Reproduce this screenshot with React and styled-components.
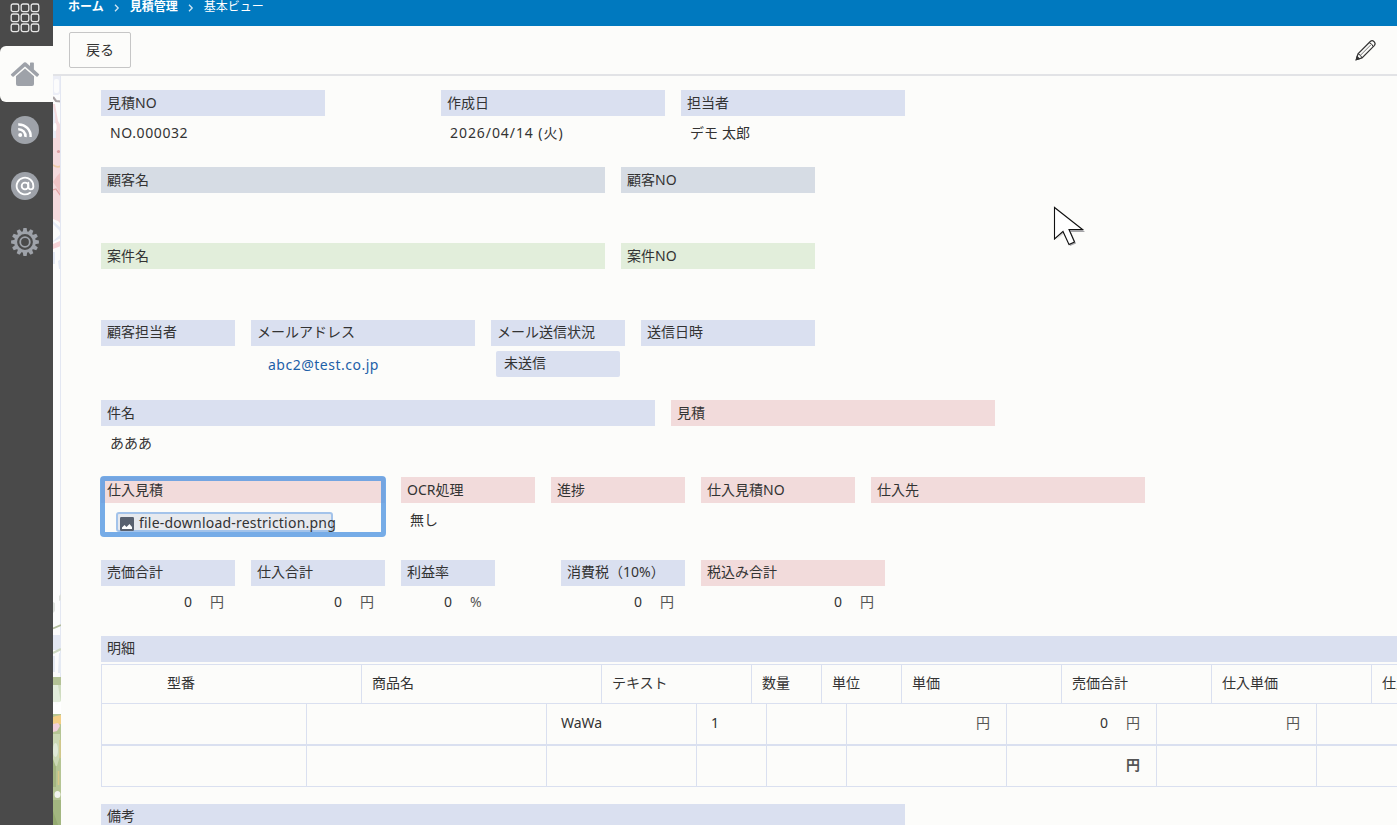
import React from 'react';
import styled, { createGlobalStyle } from 'styled-components';
import { AtSign } from 'lucide-react';

const GlobalStyle = createGlobalStyle`
  * {
    box-sizing: border-box;
  }

  body {
    margin: 0;
    overflow: hidden;
    color: #333;
    background: #fcfcfa;
    font-family: 'Noto Sans', 'Noto Sans CJK JP', sans-serif;
    font-size: 14px;
  }
`;

const COLORS = {
  blue: '#dae0f0',
  slate: '#d6dce4',
  green: '#e2eedb',
  pink: '#f2dbdb',
};

const Layout = styled.div`
  position: relative;
  display: flex;
  height: 825px;
  overflow: hidden;
`;

const Sidebar = styled.nav`
  flex: none;
  width: 53px;
  background: #4a4a4a;
`;

const AppsButton = styled.div`
  display: flex;
  justify-content: center;
  height: 46px;
  padding: 3px 3px 0 0;
`;

const NavItem = styled.div`
  display: flex;
  align-items: center;
  justify-content: center;
  height: 56px;
  padding-right: 3px;
  border-radius: 6px 0 0 6px;
  background: ${({ $active }) => ($active ? '#fcfcfa' : 'transparent')};
`;

const RoundIcon = styled.span`
  display: flex;
  align-items: center;
  justify-content: center;
  width: 28px;
  height: 28px;
  border-radius: 50%;
  color: #fff;
  background: #9ea2a9;
`;

const Main = styled.div`
  flex: 1;
  min-width: 0;
  display: flex;
  flex-direction: column;
`;

const Breadcrumb = styled.div`
  flex: none;
  display: flex;
  height: 26px;
  padding-left: 15px;
  color: #fff;
  background: #0079bf;
  font-size: 12px;
  line-height: 14px;

  svg {
    margin: 4px 10px 0 10px;
  }
`;

const Toolbar = styled.div`
  flex: none;
  display: flex;
  align-items: flex-start;
  justify-content: space-between;
  height: 50px;
  padding: 6px 20px 0 16px;
  border-bottom: 2px solid #e2e3e6;

  > svg {
    margin-top: 7px;
  }
`;

const BackButton = styled.button`
  width: 62px;
  height: 36px;
  padding: 0 0 3px;
  border: 1px solid #c6c6c6;
  border-radius: 2px;
  color: #333;
  background: #fcfcfa;
  font: inherit;
`;

const Body = styled.div`
  flex: 1;
  min-height: 0;
  display: flex;
`;

const Wallpaper = styled.div`
  flex: none;
  width: 8px;
  overflow: hidden;
`;

const Sheet = styled.div`
  flex: 1;
  min-width: 0;
  padding: 14px 0 0 40px;
  overflow: hidden;
`;

const Row = styled.div`
  display: flex;
  gap: 16px;
  height: ${({ $h }) => $h}px;
`;

const NotesRow = styled(Row)`
  padding-top: 17px;
`;

const FieldBox = styled.div`
  position: relative;
  flex: none;
  width: ${({ $w }) => $w}px;
  margin-left: ${({ $gap }) => $gap || 0}px;
`;

const Label = styled.div`
  height: 26px;
  padding-left: 6px;
  line-height: ${({ $raised }) => ($raised ? 23 : 25)}px;
  white-space: nowrap;
  background: ${({ $tone }) => COLORS[$tone]};
`;

const Value = styled.div`
  padding: 4px 0 0 9px;
  line-height: 26px;
  letter-spacing: ${({ $spacing }) => $spacing || 0}px;
  white-space: nowrap;
`;

const MailLink = styled.a`
  display: block;
  padding: 6px 0 0 17px;
  line-height: 26px;
  letter-spacing: 0.5px;
  color: #1d60a8;
`;

const StatusBadge = styled.div`
  width: 124px;
  height: 26px;
  margin: 5px 0 0 5px;
  padding-left: 8px;
  border-radius: 2px;
  line-height: 24px;
  background: ${COLORS.blue};
`;

const Amount = styled.div`
  display: flex;
  justify-content: flex-end;
  gap: 18px;
  padding: ${({ $inTable }) => ($inTable ? '0 16px 0 0' : '3px 11px 0 0')};
  line-height: 26px;
  font-weight: ${({ $bold }) => ($bold ? 700 : 400)};

  span:last-child {
    min-width: 14px;
    color: #555;
  }
`;

const FocusFrame = styled.div`
  position: absolute;
  top: -1px;
  left: -1px;
  width: 286px;
  height: 61px;
  border: 5px solid rgba(84, 151, 226, 0.8);
  border-radius: 4px;
`;

const FileRow = styled.div`
  display: flex;
  align-items: center;
  width: 217px;
  height: 20px;
  margin: 9px 0 0 15px;
  padding-left: 2px;
  border: 2px solid #a3c3ea;
  border-radius: 3px;
  background: #e6e9ee;
  white-space: nowrap;

  svg {
    flex: none;
    margin: 3px 5px 0 0;
  }
`;

const FileName = styled.span`
  letter-spacing: 0.22px;
`;

const TableRow = styled.div`
  display: flex;
  width: max-content;
  height: ${({ $h }) => $h}px;
  border-top: ${({ $top }) => $top || 0}px solid ${COLORS.blue};
  border-bottom: ${({ $bottom }) => $bottom || 0}px solid ${COLORS.blue};
`;

const Cell = styled.div`
  flex: none;
  width: ${({ $w }) => $w}px;
  padding: ${({ $pad }) => $pad};
  border-left: 1px solid ${COLORS.blue};
  line-height: 26px;
  white-space: nowrap;
`;

const Pointer = styled.svg`
  position: absolute;
  left: 1052px;
  top: 205px;
`;

/* sliver of the flower wallpaper left of the sheet */
const Flowers = () => (
  <svg width="8" height="749" viewBox="0 0 8 749">
    <rect width="8" height="749" fill="#fcfcfc" />
    <path d="M0 0h8v17l-3 2H0z" fill="#eceef6" />
    <rect x="1" y="3" width="5" height="14" rx="2" fill="#fcfcfc" />
    <path d="M0 21 3 25 8 25.500" fill="none" stroke="#aaa4a6" strokeWidth="2.200" />
    <path d="M0 28h2l3 17 3 5v98l-3-3-5-2z" fill="#f5dadd" />
    <path d="M0 30 2 38 3 62H0z" fill="#e9edf7" />
    <ellipse cx="2" cy="51" rx="1.600" ry="4" fill="#fff" />
    <circle cx="5.500" cy="75.500" r="1.600" fill="#dd9da0" />
    <path d="M0 89q4 3 8 1" fill="none" stroke="#efcaa6" strokeWidth="1.800" />
    <path d="M0 106 4 112 8 119V96l-4 4z" fill="#f0c3c5" />
    <path d="M0 114l3-1 5 7" fill="none" stroke="#e3a3a5" strokeWidth="1.300" />
    <path d="M0 148 6 154 8 159V152L0 145zM0 165l8-7v4l-8 4z" fill="#e6ebf7" />
    <path d="M0 168 8 164.500V170L0 173z" fill="#f6d3d7" />
    <path d="M0 176h2v12H0zM5 185l3-2v10H6z" fill="#e4e9f5" />
    <path d="M7.500 0V749" stroke="#e3e7f2" />
    <path d="M0 526l2 1v8l-2 2zM6 520l2-2v6l-2 1z" fill="#dfe2df" />
    <path d="M0 552.500 8 549" stroke="#b3bd9c" strokeWidth="1.800" />
    <rect y="559" width="8" height="15" fill="#e3e7f2" />
    <path d="M0 577 8 573" stroke="#cdd8c2" strokeWidth="2.400" />
    <path d="M0 580h2v16H0zM6 577h2v20H5z" fill="#e5eaf3" />
    <rect y="601" width="8" height="8" fill="#b3c295" />
    <rect y="609" width="8" height="17" fill="#e2ecdb" />
    <path d="M5 609h3v18z" fill="#cfdcc0" />
    <path d="M0 626 4 629 8 625V638H0z" fill="#fff" />
    <rect y="638" width="8" height="111" fill="#b5c594" />
    <path d="M0 641l3-1 5-1v9L2 650H0z" fill="#f3ce85" />
    <path d="M0 648l5-1 2 3-3 5-4 1z" fill="#f0d0dc" />
    <path d="M0 658h7v22L4 690H0z" fill="#cbd8b4" />
    <ellipse cx="2.500" cy="674" rx="2.500" ry="7" fill="#e0e9d8" />
    <path d="M7 664v18M5.500 695v14" stroke="#d9c886" strokeWidth="1.500" />
    <path d="M0 683l3 8v20H0z" fill="#a3b580" />
    <ellipse cx="4.500" cy="718.500" rx="3" ry="3.500" fill="#f2f4ef" />
    <rect y="724" width="8" height="25" fill="#a2b680" />
    <path d="M0 735 5 749H0z" fill="#94aa70" />
  </svg>
);

const AppsIcon = () => (
  <svg width="30" height="30" fill="none" stroke="#e6e6e6" strokeWidth="1.3">
    {[0, 1, 2].map((r) =>
      [0, 1, 2].map((c) => (
        <rect key={`${r}${c}`} x={1.2 + c * 10} y={1 + r * 10} width="7.6" height="7.6" rx="1.8" />
      ))
    )}
  </svg>
);

const HomeIcon = () => (
  <svg width="30" height="28" viewBox="0 0 30 28" fill="#9ea2a9">
    <path d="M1 14.200 14 2.600q1-.8 2 0l4 3.400V3.200q0-.7.7-.7h2.500q.7 0 .7.7V9.500l5 4.500q.5.600 0 1.100l-1.300 1.300q-.6.500-1.200 0L15 6.500 3.700 16.400q-.6.500-1.200 0L1.100 15.200q-.5-.5-.1-1z" />
    <path d="M15 8.500 6 16.300V24q0 2 2 2h14q2 0 2-2v-7.700z" />
  </svg>
);

const FeedIcon = () => (
  <svg width="16" height="16" viewBox="0 0 16 16" fill="none" stroke="#fff" strokeWidth="2.500">
    <circle cx="3.200" cy="13" r="2" fill="#fff" stroke="none" />
    <path d="M1.200 7.300A7 7 0 0 1 8.500 15M1.200 2.500A11.700 11.700 0 0 1 13.600 15" />
  </svg>
);

const GearIcon = () => (
  <svg width="28" height="28" viewBox="-14 -14 28 28" fill="none" stroke="#9ea2a9">
    <circle r="9.300" strokeWidth="2.800" />
    <circle r="4.800" strokeWidth="1.800" />
    {Array.from({ length: 12 }, (_, i) => (
      <path
        key={i}
        d="M-2.300 -10 -1.600 -13.900H1.600L2.300 -10z"
        transform={`rotate(${i * 30})`}
        fill="#9ea2a9"
        stroke="none"
      />
    ))}
  </svg>
);

const Chevron = () => (
  <svg width="6" height="8" viewBox="0 0 6 8" fill="none" stroke="#cfe6f4" strokeWidth="1.300">
    <path d="M1 .8 4.200 4 1 7.200" />
  </svg>
);

const PencilIcon = () => (
  <svg width="22" height="22" viewBox="0 0 22 22" fill="none" stroke="#333" strokeWidth="1.200">
    <path d="M1.300 20.700 3 14.800 15.500 2.300q1.700-1.400 3.600.4 1.800 1.900.4 3.600L7 18.900z" />
    <path d="M3 14.800q2.800.7 4 4.100M14.200 3.700q2.900.7 4 4" strokeWidth="1" />
    <path d="M5 16.700 16.200 5.500" stroke="#777" strokeWidth="1" />
    <path d="M1.300 20.700l.8-3 2.200 2.100z" fill="#333" />
  </svg>
);

const ImageIcon = () => (
  <svg width="14" height="14" viewBox="0 0 14 14">
    <rect width="14" height="14" rx="1.200" fill="#59616f" />
    <path d="M2 12V10.500L4.500 8l2 2L9.500 7l2.500 3v2z" fill="#fff" />
  </svg>
);

const Field = ({ label, tone = 'blue', w, gap, raised, children }) => (
  <FieldBox $w={w} $gap={gap}>
    <Label $tone={tone} $raised={raised}>
      {label}
    </Label>
    {children}
  </FieldBox>
);

const Money = ({ value, unit = '円', inTable, bold }) => (
  <Amount $inTable={inTable} $bold={bold}>
    {value !== undefined && <span>{value}</span>}
    <span>{unit}</span>
  </Amount>
);

const HEAD = [
  [260, '型番'],
  [240, '商品名'],
  [150, 'テキスト'],
  [70, '数量'],
  [80, '単位'],
  [160, '単価'],
  [150, '売価合計'],
  [160, '仕入単価'],
  [150, '仕入合計'],
];

const WIDTHS = [205, 240, 150, 70, 80, 160, 150, 160, 150];

const DETAIL = {
  2: 'WaWa',
  3: '1',
  5: <Money inTable />,
  6: <Money value="0" inTable />,
  7: <Money inTable />,
};

const TOTALS = { 6: <Money inTable bold /> };

const isText = (v) => typeof v === 'string';

const App = () => (
  <Layout>
    <GlobalStyle />
    <Sidebar>
      <AppsButton>
        <AppsIcon />
      </AppsButton>
      <NavItem $active>
        <HomeIcon />
      </NavItem>
      <NavItem>
        <RoundIcon>
          <FeedIcon />
        </RoundIcon>
      </NavItem>
      <NavItem>
        <RoundIcon>
          <AtSign size={20} strokeWidth={2.2} />
        </RoundIcon>
      </NavItem>
      <NavItem>
        <GearIcon />
      </NavItem>
    </Sidebar>

    <Main>
      <Breadcrumb>
        <b>ホーム</b>
        <Chevron />
        <b>見積管理</b>
        <Chevron />
        <span>基本ビュー</span>
      </Breadcrumb>
      <Toolbar>
        <BackButton>戻る</BackButton>
        <PencilIcon />
      </Toolbar>

      <Body>
        <Wallpaper>
          <Flowers />
        </Wallpaper>
        <Sheet>
          <Row $h={77}>
            <Field label="見積NO" w={224}>
              <Value $spacing={0.6}>NO.000032</Value>
            </Field>
            <Field label="作成日" w={224} gap={100}>
              <Value $spacing={0.93}>2026/04/14 (火)</Value>
            </Field>
            <Field label="担当者" w={224}>
              <Value $spacing={0.1}>デモ 太郎</Value>
            </Field>
          </Row>
          <Row $h={76}>
            <Field label="顧客名" tone="slate" w={504} />
            <Field label="顧客NO" tone="slate" w={194} />
          </Row>
          <Row $h={77}>
            <Field label="案件名" tone="green" w={504} />
            <Field label="案件NO" tone="green" w={194} />
          </Row>
          <Row $h={80}>
            <Field label="顧客担当者" w={134} raised />
            <Field label="メールアドレス" w={224} raised>
              <MailLink>abc2@test.co.jp</MailLink>
            </Field>
            <Field label="メール送信状況" w={134} raised>
              <StatusBadge>未送信</StatusBadge>
            </Field>
            <Field label="送信日時" w={174} raised />
          </Row>
          <Row $h={77}>
            <Field label="件名" w={554}>
              <Value>あああ</Value>
            </Field>
            <Field label="見積" tone="pink" w={324} />
          </Row>
          <Row $h={83}>
            <Field label="仕入見積" tone="pink" w={284}>
              <FileRow>
                <ImageIcon />
                <FileName>file-download-restriction.png</FileName>
              </FileRow>
              <FocusFrame />
            </Field>
            <Field label="OCR処理" tone="pink" w={134}>
              <Value>無し</Value>
            </Field>
            <Field label="進捗" tone="pink" w={134} />
            <Field label="仕入見積NO" tone="pink" w={154} />
            <Field label="仕入先" tone="pink" w={274} />
          </Row>
          <Row $h={76}>
            <Field label="売価合計" w={134} raised>
              <Money value="0" />
            </Field>
            <Field label="仕入合計" w={134} raised>
              <Money value="0" />
            </Field>
            <Field label="利益率" w={94} raised>
              <Money value="0" unit="%" />
            </Field>
            <Field label="消費税（10%）" w={124} gap={50} raised>
              <Money value="0" />
            </Field>
            <Field label="税込み合計" tone="pink" w={184} raised>
              <Money value="0" />
            </Field>
          </Row>
          <Row $h={28}>
            <Field label="明細" w={1300} raised />
          </Row>

          <TableRow $h={40} $top={1} $bottom={1}>
            {HEAD.map(([w, text], i) => (
              <Cell key={text} $w={w} $pad={i === 0 ? '5px 0 0 65px' : '5px 0 0 10px'}>
                {text}
              </Cell>
            ))}
          </TableRow>
          <TableRow $h={42} $bottom={2}>
            {WIDTHS.map((w, i) => (
              <Cell key={i} $w={w} $pad={isText(DETAIL[i]) ? '6px 0 0 14px' : '6px 0 0'}>
                {DETAIL[i]}
              </Cell>
            ))}
          </TableRow>
          <TableRow $h={41} $bottom={1}>
            {WIDTHS.map((w, i) => (
              <Cell key={i} $w={w} $pad="6px 0 0">
                {TOTALS[i]}
              </Cell>
            ))}
          </TableRow>

          <NotesRow $h={43}>
            <Field label="備考" w={804} raised />
          </NotesRow>
        </Sheet>
      </Body>
    </Main>

    <Pointer width="36" height="42" viewBox="0 0 36 42">
      <path d="M4 35 11.500 28.500 18 41 24 38.500 19 27H33L30 24 15 24z" fill="#a5a5a8" />
      <path
        d="M2.500 2.500V34L11 26.500 17 39.500 22.500 37 17 24.500H30.500z"
        fill="#fff"
        stroke="#111"
        strokeWidth="1.100"
      />
    </Pointer>
  </Layout>
);

export default App;
